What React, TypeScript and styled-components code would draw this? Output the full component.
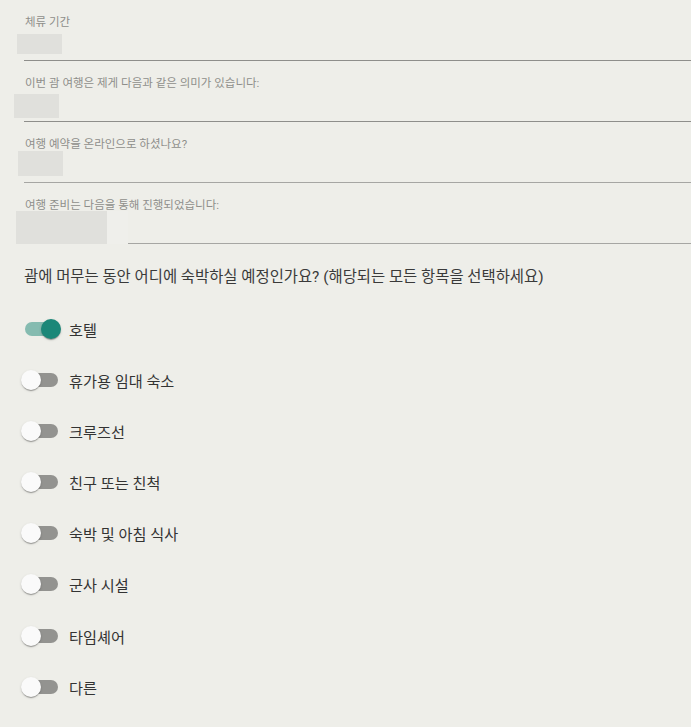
import { useState } from 'react';
import styled, { createGlobalStyle } from 'styled-components';

const GlobalStyle = createGlobalStyle`
  body {
    margin: 0;
    background-color: #eeeee9;
    font-family: Roboto, "Noto Sans CJK KR", sans-serif;
  }
`;

const Page = styled.div`
  padding: 0 0 20px 24px;
  box-sizing: border-box;
  width: 100%;
`;

const Field = styled.div<{ $faint?: boolean }>`
  position: relative;
  height: 61px;
  box-sizing: border-box;
  padding-top: 15px;
  border-bottom: 1px solid ${(p) => (p.$faint ? '#a6a6a3' : '#8e8e8b')};
`;

const FieldLabel = styled.div`
  font-size: 11.5px;
  line-height: 14px;
  color: #8e8e8b;
  padding-left: 1px;
`;

type BoxProps = { $left: number; $top: number; $w: number; $h: number; $light?: boolean };

// blurred-out answer values sit over the field
const Redaction = styled.div<BoxProps>`
  position: absolute;
  left: ${(p) => p.$left}px;
  top: ${(p) => p.$top}px;
  width: ${(p) => p.$w}px;
  height: ${(p) => p.$h}px;
  background-color: ${(p) => (p.$light ? '#efefeb' : '#e0e0dc')};
`;

const Question = styled.div`
  margin-top: 23px;
  font-size: 15.4px;
  line-height: 20px;
  color: #3a3a3a;
`;

const Options = styled.div`
  display: flex;
  flex-direction: column;
  gap: 13.1px;
  margin-top: 23px;
`;

const OptionRow = styled.label`
  display: flex;
  align-items: center;
  height: 38px;
  margin-left: -12px;
  cursor: pointer;
`;

const SwitchRoot = styled.span`
  display: flex;
  align-items: center;
  flex: none;
  width: 57px;
  height: 38px;
  padding-left: 13px;
  box-sizing: border-box;
`;

const Track = styled.span<{ $on: boolean }>`
  display: flex;
  align-items: center;
  justify-content: ${(p) => (p.$on ? 'flex-end' : 'flex-start')};
  width: 33px;
  height: 14px;
  border-radius: 7px;
  background-color: ${(p) => (p.$on ? 'rgba(27, 135, 120, 0.5)' : 'rgba(0, 0, 0, 0.38)')};
`;

const Thumb = styled.span<{ $on: boolean }>`
  flex: none;
  width: 20px;
  height: 20px;
  margin: 0 -3px 0 -4px;
  border-radius: 50%;
  background-color: ${(p) => (p.$on ? '#1b8778' : '#fafafa')};
  box-shadow: 0 2px 1px -1px rgba(0, 0, 0, 0.2), 0 1px 1px 0 rgba(0, 0, 0, 0.14),
    0 1px 3px 0 rgba(0, 0, 0, 0.12);
`;

const OptionText = styled.span`
  font-size: 15.2px;
  color: #333333;
`;

const options = [
  '호텔',
  '휴가용 임대 숙소',
  '크루즈선',
  '친구 또는 친척',
  '숙박 및 아침 식사',
  '군사 시설',
  '타임셰어',
  '다른',
];

export default function App() {
  const [checked, setChecked] = useState<boolean[]>(options.map((_, i) => i === 0));

  const toggle = (i: number) =>
    setChecked((prev) => prev.map((v, j) => (j === i ? !v : v)));

  return (
    <>
      <GlobalStyle />
      <Page>
        <Field>
          <FieldLabel>체류 기간</FieldLabel>
          <Redaction $left={-7} $top={34} $w={45} $h={20} />
        </Field>
        <Field>
          <FieldLabel>이번 괌 여행은 제게 다음과 같은 의미가 있습니다:</FieldLabel>
          <Redaction $left={-10} $top={33} $w={45} $h={24} />
        </Field>
        <Field $faint>
          <FieldLabel>여행 예약을 온라인으로 하셨나요?</FieldLabel>
          <Redaction $left={-6} $top={29} $w={45} $h={25} />
        </Field>
        <Field $faint>
          <FieldLabel>여행 준비는 다음을 통해 진행되었습니다:</FieldLabel>
          <Redaction $left={-8} $top={28} $w={91} $h={33} />
          <Redaction $left={83} $top={28} $w={21} $h={33} $light />
        </Field>

        <Question>
          괌에 머무는 동안 어디에 숙박하실 예정인가요? (해당되는 모든 항목을 선택하세요)
        </Question>

        <Options>
          {options.map((label, i) => (
            <OptionRow key={label} onClick={() => toggle(i)}>
              <SwitchRoot>
                <Track $on={checked[i]}>
                  <Thumb $on={checked[i]} />
                </Track>
              </SwitchRoot>
              <OptionText>{label}</OptionText>
            </OptionRow>
          ))}
        </Options>
      </Page>
    </>
  );
}
